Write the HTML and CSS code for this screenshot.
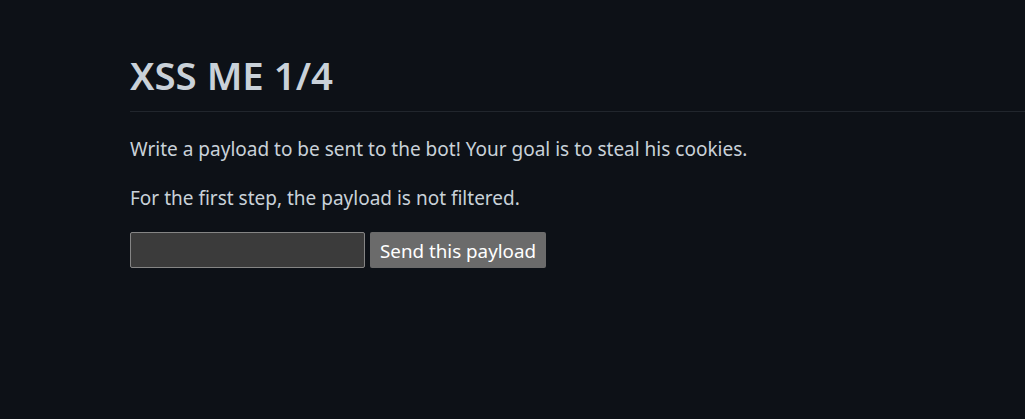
FILE: index.html
```html
<!DOCTYPE html>
<html>
<head>
<meta charset="utf-8">
<link rel="stylesheet" href="styles.css">
</head>
<body>
<main class="page">
  <h1 class="title">XSS ME 1/4</h1>
  <p class="text first">Write a payload to be sent to the bot! Your goal is to steal his cookies.</p>
  <p class="text">For the first step, the payload is not filtered.</p>
  <form class="form">
    <input class="field" type="text">
    <button class="btn" type="button">Send this payload</button>
  </form>
</main>
</body>
</html>
```
FILE: styles.css
```css
html, body {
  margin: 0;
  padding: 0;
  background: #0d1117;
  height: 100%;
}
body {
  font-family: "Noto Sans", "Open Sans", sans-serif;
  color: #c9d1d9;
  font-size: 19px;
  line-height: 28.8px;
  overflow: hidden;
}
.page {
  padding: 51px 0 0 130px;
}
.title {
  margin: 0 0 23px 0;
  font-size: 38.4px;
  font-weight: 600;
  line-height: 48px;
  padding-bottom: 12px;
  border-bottom: 1px solid #21262d;
  color: #c9d1d9;
}
.text {
  margin: 0 0 20px 0;
}
.text:last-of-type {
  margin-bottom: 19px;
}
.form {
  display: flex;
  gap: 5px;
  align-items: stretch;
}
.field {
  width: 235px;
  height: 36px;
  box-sizing: border-box;
  background: #3b3b3b;
  border: 1px solid #858585;
  border-radius: 2px;
  color: #fff;
}
.btn {
  height: 36px;
  box-sizing: border-box;
  background: #6b6b6b;
  border: none;
  border-radius: 2px;
  color: #fff;
  font-family: inherit;
  font-size: 18.8px;
  padding: 2px 10px 0;
}
```
